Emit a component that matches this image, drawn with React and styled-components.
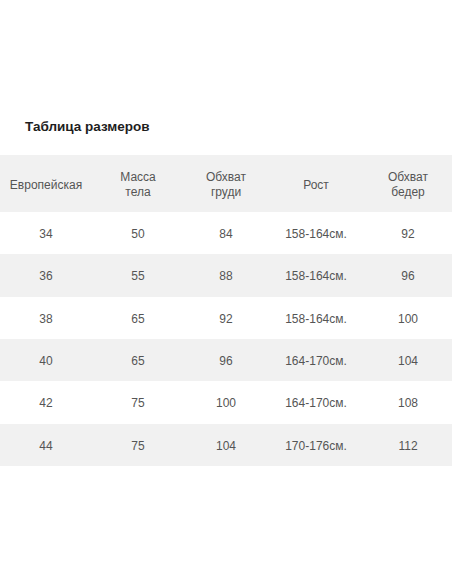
import React from "react";
import styled, { createGlobalStyle } from "styled-components";

const Global = createGlobalStyle`
  html, body { margin: 0; padding: 0; background: #fff; }
  body { font-family: "Liberation Sans", Arial, sans-serif; }
`;

const Page = styled.div`
  width: 452px;
  padding-top: 117px;
`;

const Title = styled.h2`
  margin: 0 0 18px 25px;
  font-size: 13.5px;
  line-height: 20px;
  font-weight: bold;
  color: #1e1e1e;
`;

const Table = styled.div`
  display: flex;
  flex-direction: column;
`;

const Row = styled.div`
  display: grid;
  grid-template-columns: 92px 92px 84px 96px 88px;
  align-items: center;
  box-sizing: border-box;
  padding-top: 3px;
  height: ${(p) => p.$h}px;
  background: ${(p) => (p.$shaded ? "#f1f1f1" : "#fff")};
`;

const Cell = styled.div`
  text-align: center;
  font-size: 12px;
  line-height: 15px;
  color: #555;
`;

const head = [
  ["Европейская"],
  ["Масса", "тела"],
  ["Обхват", "груди"],
  ["Рост"],
  ["Обхват", "бедер"],
];

const data = [
  ["34", "50", "84", "158-164см.", "92"],
  ["36", "55", "88", "158-164см.", "96"],
  ["38", "65", "92", "158-164см.", "100"],
  ["40", "65", "96", "164-170см.", "104"],
  ["42", "75", "100", "164-170см.", "108"],
  ["44", "75", "104", "170-176см.", "112"],
];

export default function App() {
  return (
    <Page>
      <Global />
      <Title>Таблица размеров</Title>
      <Table>
        <Row $h={57} $shaded>
          {head.map((lines, i) => (
            <Cell key={i}>
              {lines.map((l, j) => (
                <React.Fragment key={j}>
                  {j > 0 && <br />}
                  {l}
                </React.Fragment>
              ))}
            </Cell>
          ))}
        </Row>
        {data.map((r, i) => (
          <Row key={i} $h={42.33} $shaded={i % 2 === 1}>
            {r.map((c, j) => (
              <Cell key={j}>{c}</Cell>
            ))}
          </Row>
        ))}
      </Table>
    </Page>
  );
}
